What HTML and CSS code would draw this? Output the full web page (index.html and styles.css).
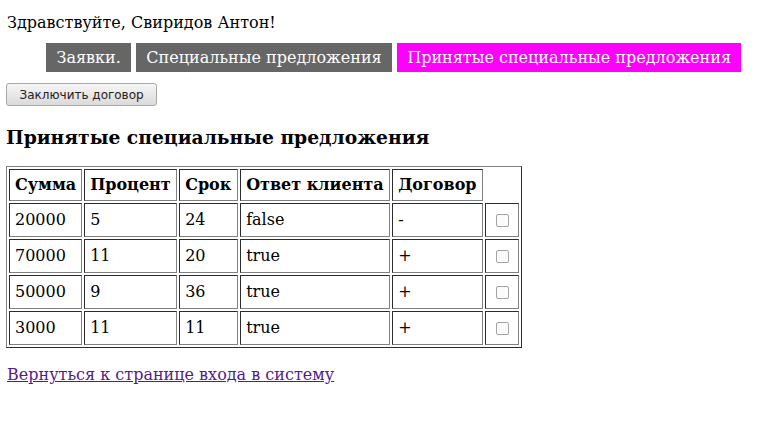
FILE: index.html
```html
<!DOCTYPE html>
<html>
<head>
<meta charset="utf-8">
<link rel="stylesheet" href="styles.css">
</head>
<body>
<p class="greeting">Здравствуйте, Свиридов Антон!</p>
<ul class="tabs">
  <li class="tab">Заявки.</li>
  <li class="tab">Специальные предложения</li>
  <li class="tab active">Принятые специальные предложения</li>
</ul>
<button class="btn">Заключить договор</button>
<h3 class="title">Принятые специальные предложения</h3>
<table class="offers">
  <tr><th class="c-sum">Сумма</th><th class="c-pct">Процент</th><th class="c-term">Срок</th><th class="c-ans">Ответ клиента</th><th class="c-deal">Договор</th></tr>
  <tr><td>20000</td><td>5</td><td>24</td><td>false</td><td>-</td><td class="cb"><input type="checkbox"></td></tr>
  <tr><td>70000</td><td>11</td><td>20</td><td>true</td><td>+</td><td class="cb"><input type="checkbox"></td></tr>
  <tr><td>50000</td><td>9</td><td>36</td><td>true</td><td>+</td><td class="cb"><input type="checkbox"></td></tr>
  <tr><td>3000</td><td>11</td><td>11</td><td>true</td><td>+</td><td class="cb"><input type="checkbox"></td></tr>
</table>
<p class="back"><a href="#">Вернуться к странице входа в систему</a></p>
</body>
</html>
```
FILE: styles.css
```css
body {
  margin: 0 6px;
  font-family: "DejaVu Serif", serif;
  font-size: 16px;
  color: #000;
  background: #fff;
}
.greeting {
  margin: 13px 0 0 1px;
  line-height: 19px;
}
.tabs {
  list-style: none;
  margin: 11px 0 0 40px;
  padding: 0;
  display: flex;
  gap: 5px;
}
.tab {
  background: #666;
  color: #fff;
  padding: 5px 10px 5px 10.5px;
  line-height: 19px;
}
.tab.active {
  background: #ff00ff;
}
.btn {
  display: block;
  margin: 11px 0 0;
  height: 23px;
  padding: 0 12.5px;
  font-family: "DejaVu Sans", sans-serif;
  font-size: 12px;
  color: #222;
  border: 1px solid #a9a9a9;
  border-radius: 3px;
  background: linear-gradient(#f6f6f6, #dadada);
}
.title {
  margin: 20px 0 18px;
  font-size: 18.72px;
  line-height: 22px;
}
.offers {
  border: 1px outset #808080;
  border-spacing: 2px;
}
.offers td, .offers th {
  box-sizing: border-box;
  border: 1px inset #808080;
  padding: 5px;
  text-align: left;
}
.offers th {
  line-height: 20px;
}
.offers td {
  line-height: 22px;
}
.c-sum { width: 73px; }
.c-pct { width: 93px; }
.c-term { width: 59px; }
.c-ans { width: 150px; }
.c-deal { width: 91px; }
.offers td.cb {
  width: 34px;
  text-align: center;
}
.offers input {
  appearance: none;
  -webkit-appearance: none;
  box-sizing: border-box;
  width: 13px;
  height: 13px;
  margin: 0;
  border: 1px solid #a3a3a3;
  border-radius: 2px;
  background: #fbfbfb;
  vertical-align: middle;
}
.back {
  margin: 17px 0 0 1px;
  line-height: 19px;
}
.back a {
  color: #551a8b;
}
```
